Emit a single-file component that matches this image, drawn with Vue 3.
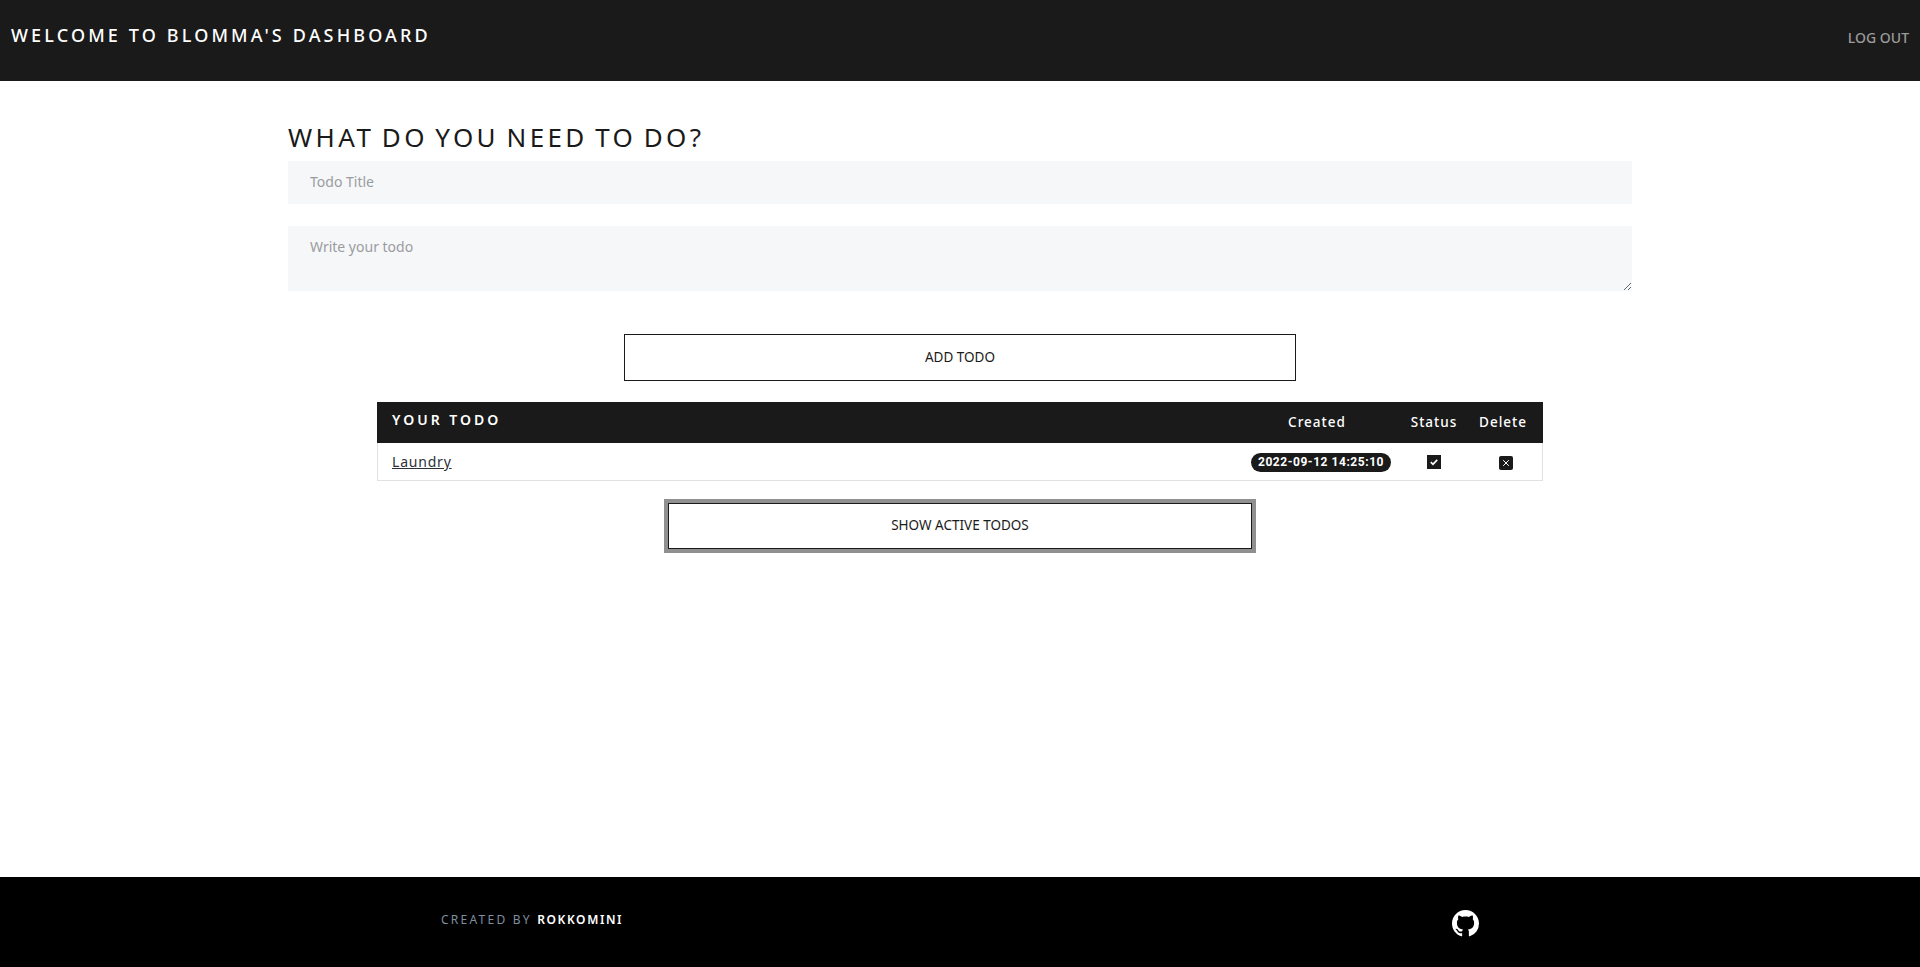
<template>
  <div class="page">
    <header class="topbar">
      <h1>Welcome to Blomma's Dashboard</h1>
      <a class="logout" href="#">Log out</a>
    </header>

    <main class="content">
      <form class="todo-form" @submit.prevent>
        <h2>What do you need to do?</h2>
        <input type="text" placeholder="Todo Title" />
        <textarea placeholder="Write your todo"></textarea>
        <button class="btn btn-add" type="submit">ADD TODO</button>
      </form>

      <table class="todo-table">
        <thead>
          <tr>
            <th class="title-col">Your Todo</th>
            <th class="created-col">Created</th>
            <th class="status-col">Status</th>
            <th class="delete-col">Delete</th>
          </tr>
        </thead>
        <tbody>
          <tr v-for="todo in todos" :key="todo.id">
            <td class="title-col"><a href="#">{{ todo.title }}</a></td>
            <td class="created-col"><span class="date">{{ todo.created }}</span></td>
            <td class="status-col">
              <span class="icon-box square">
                <svg viewBox="0 0 10 10" width="10" height="10">
                  <path d="M1.8 5.2 4 7.3 8.2 2.9" fill="none" stroke="#fff" stroke-width="1.7" />
                </svg>
              </span>
            </td>
            <td class="delete-col">
              <span class="icon-box shifted">
                <svg viewBox="0 0 10 10" width="10" height="10">
                  <path d="M2.2 2.2 7.8 7.8M7.8 2.2 2.2 7.8" fill="none" stroke="#fff" stroke-width="1" />
                </svg>
              </span>
            </td>
          </tr>
        </tbody>
      </table>

      <button class="btn btn-show" type="button">SHOW ACTIVE TODOS</button>
    </main>

    <footer class="footer">
      <p class="credit">Created by <b>Rokkomini</b></p>
      <svg class="github" viewBox="0 0 16 16" width="27" height="27">
        <path
          fill="#fff"
          d="M8 0C3.58 0 0 3.58 0 8c0 3.54 2.29 6.53 5.47 7.59.4.07.55-.17.55-.38 0-.19-.01-.82-.01-1.49-2.01.37-2.53-.49-2.69-.94-.09-.23-.48-.94-.82-1.13-.28-.15-.68-.52-.01-.53.63-.01 1.08.58 1.23.82.72 1.21 1.87.87 2.33.66.07-.52.28-.87.51-1.07-1.78-.2-3.64-.89-3.64-3.95 0-.87.31-1.59.82-2.15-.08-.2-.36-1.02.08-2.12 0 0 .67-.21 2.2.82.64-.18 1.32-.27 2-.27s1.36.09 2 .27c1.53-1.04 2.2-.82 2.2-.82.44 1.1.16 1.92.08 2.12.51.56.82 1.27.82 2.15 0 3.07-1.87 3.75-3.65 3.95.29.25.54.73.54 1.48 0 1.07-.01 1.93-.01 2.2 0 .21.15.46.55.38A8.01 8.01 0 0 0 16 8c0-4.42-3.58-8-8-8z"
        />
      </svg>
    </footer>
  </div>
</template>

<script setup>
import { ref } from 'vue';

const todos = ref([
  { id: 1, title: 'Laundry', created: '2022-09-12 14:25:10' },
]);
</script>

<style>
body {
  margin: 0;
  background: #fff;
}
</style>

<style scoped>
* {
  box-sizing: border-box;
}

.page {
  display: flex;
  flex-direction: column;
  min-height: 967px;
  font-family: 'Noto Sans', 'Open Sans', sans-serif;
  color: #1a1a1a;
}

.topbar {
  display: flex;
  justify-content: space-between;
  align-items: flex-start;
  height: 81px;
  padding: 0 11px;
  background: #1a1a1a;
}

.topbar h1 {
  margin: 24px 0 0;
  font-size: 18px;
  line-height: 22px;
  font-weight: 500;
  letter-spacing: 3.15px;
  text-transform: uppercase;
  color: #fff;
}

.logout {
  margin: 29px 0 0;
  font-size: 14px;
  line-height: 18px;
  font-weight: 500;
  text-transform: uppercase;
  text-decoration: none;
  color: #9b9b9b;
}

.content {
  flex: 1;
  display: flex;
  flex-direction: column;
  align-items: center;
}

.todo-form {
  display: flex;
  flex-direction: column;
  align-items: center;
  width: 1344px;
  padding-top: 41px;
}

.todo-form h2 {
  align-self: flex-start;
  margin: 0 0 9px;
  font-size: 26px;
  line-height: 30px;
  font-weight: 400;
  letter-spacing: 3.4px;
  word-spacing: -2.7px;
  text-transform: uppercase;
  color: #1a1a1a;
}

.todo-form input,
.todo-form textarea {
  display: block;
  width: 100%;
  margin: 0;
  padding: 0 22px;
  border: 0;
  border-radius: 0;
  outline: 0;
  background: #f6f7f9;
  font: 14px/20px 'Noto Sans', 'Open Sans', sans-serif;
  color: #1a1a1a;
}

.todo-form input {
  height: 43px;
  padding-bottom: 2px;
}

.todo-form textarea {
  height: 65px;
  margin-top: 22px;
  padding-top: 11px;
  padding-bottom: 11px;
}

.todo-form input::placeholder,
.todo-form textarea::placeholder {
  color: #9a9ca0;
}

.btn {
  display: block;
  padding: 0 0 2px;
  background: #fff;
  border: 1.5px solid #1a1a1a;
  font: 13.5px/18px 'Noto Sans', 'Open Sans', sans-serif;
  color: #1a1a1a;
  cursor: pointer;
}

.btn-add {
  width: 672px;
  height: 47px;
  margin-top: 43px;
}

.todo-table {
  width: 1166px;
  margin-top: 21px;
  border-collapse: separate;
  border-spacing: 0;
  table-layout: fixed;
}

.todo-table th {
  height: 41px;
  padding: 0 0 1px;
  background: #1a1a1a;
  font-size: 13.5px;
  font-weight: 500;
  letter-spacing: 1px;
  text-align: center;
  color: #fff;
}

.todo-table th.title-col {
  padding: 0 0 7px 15px;
  font-size: 14px;
  font-weight: 600;
  letter-spacing: 3px;
  text-align: left;
  text-transform: uppercase;
}

.todo-table td {
  height: 38px;
  padding: 0;
  border-bottom: 1px solid #e1e1e1;
  font-size: 14px;
  text-align: center;
}

.todo-table td.title-col {
  padding-left: 14px;
  border-left: 1px solid #e1e1e1;
  text-align: left;
}

.todo-table td.delete-col {
  border-right: 1px solid #e1e1e1;
}

.title-col a {
  color: #2c3138;
  letter-spacing: 0.8px;
}

.created-col {
  width: 176px;
}

.status-col {
  width: 58px;
}

.delete-col {
  width: 80px;
}

.date {
  display: inline-block;
  height: 19px;
  margin-left: 8px;
  padding: 0 7px;
  border-radius: 10px;
  background: #1a1a1a;
  font-family: Roboto, 'Noto Sans', sans-serif;
  font-size: 12px;
  line-height: 19px;
  font-weight: 700;
  letter-spacing: 0.55px;
  color: #fff;
  white-space: nowrap;
}

.icon-box {
  display: inline-flex;
  align-items: center;
  justify-content: center;
  width: 14px;
  height: 14px;
  margin-bottom: 2px;
  border-radius: 2px;
  background: #1a1a1a;
  vertical-align: middle;
}

.icon-box.square {
  border-radius: 0;
}

.icon-box.shifted {
  margin-left: 6px;
  margin-bottom: 0;
}

.btn-show {
  width: 584px;
  height: 46px;
  margin-top: 22px;
  outline: 4px solid #909090;
}

.footer {
  display: flex;
  align-items: center;
  justify-content: space-between;
  height: 90px;
  padding: 0 441px;
  background: #000;
}

.credit {
  margin: 0 0 5px;
  font-size: 12px;
  line-height: 16px;
  letter-spacing: 2.25px;
  text-transform: uppercase;
  color: #7f8fa0;
}

.credit b {
  font-weight: 600;
  letter-spacing: 1.6px;
  color: #fff;
}

.github {
  margin-top: 2px;
}
</style>
